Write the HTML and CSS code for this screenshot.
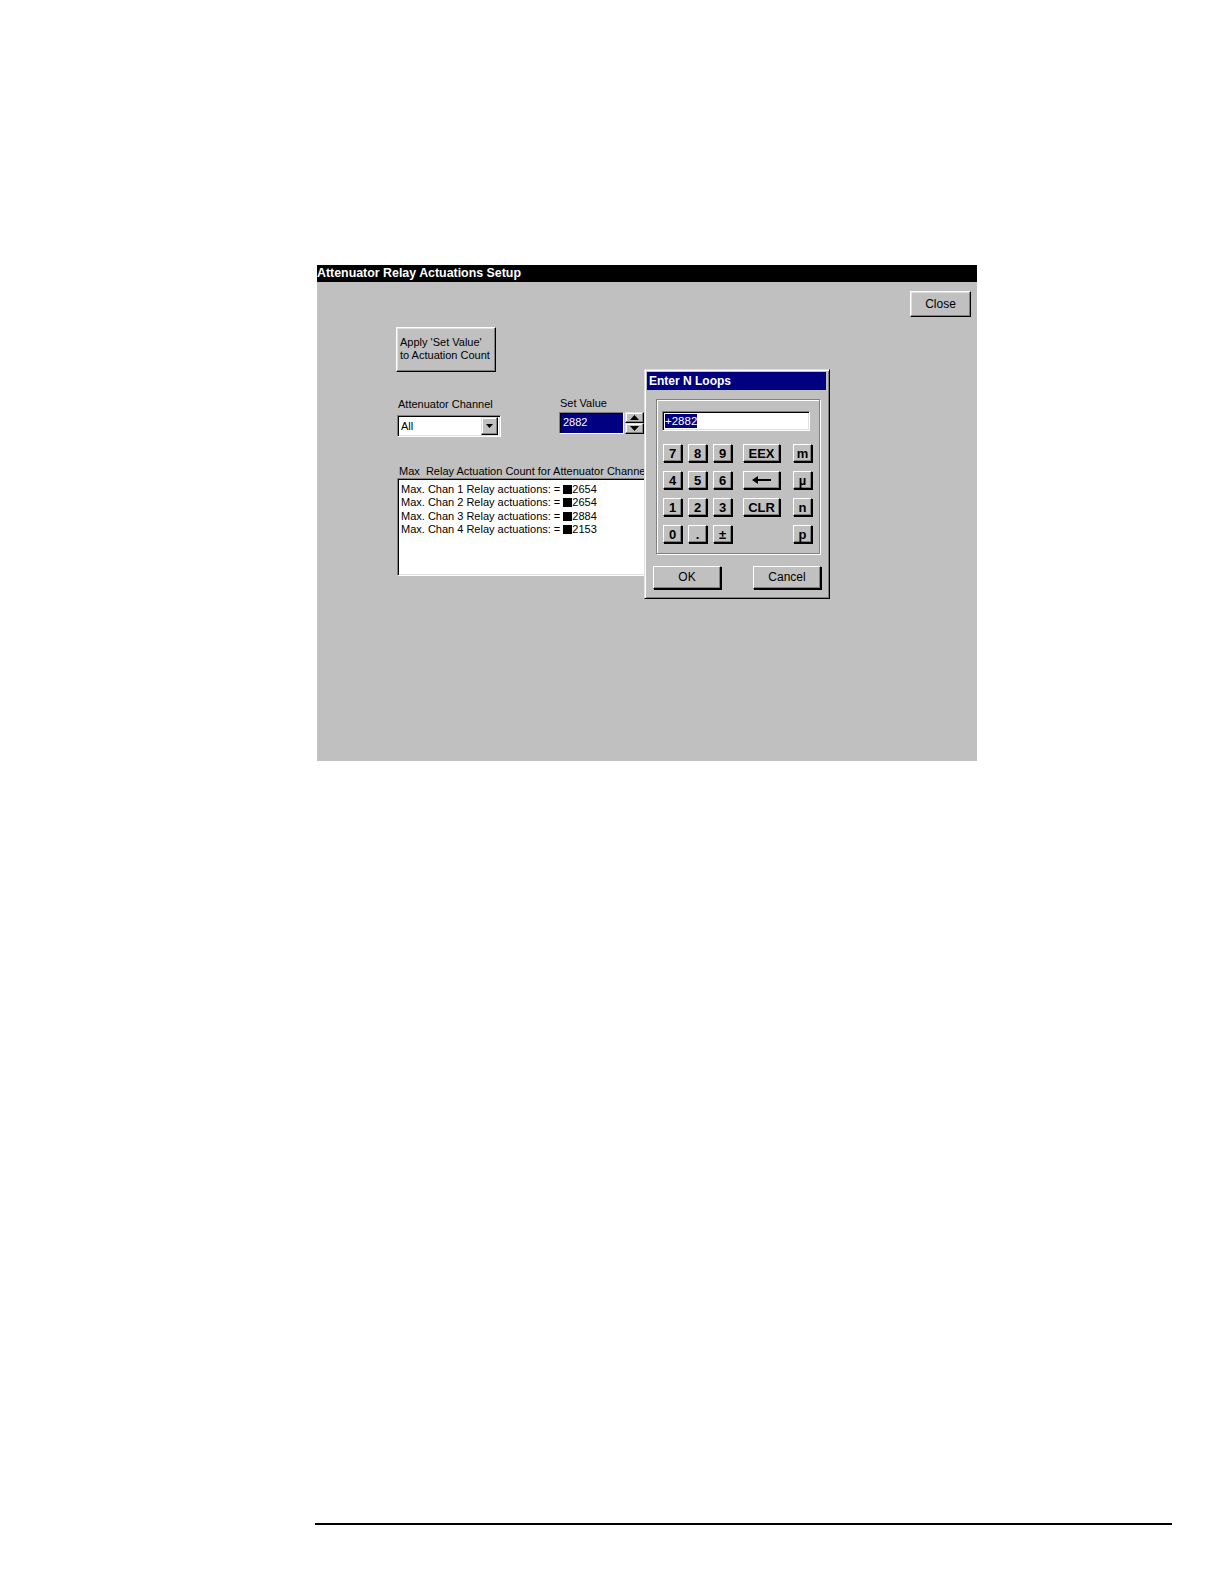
FILE: index.html
```html
<!DOCTYPE html>
<html>
<head>
<meta charset="utf-8">
<title>Attenuator Relay Actuations Setup</title>
<link rel="stylesheet" href="styles.css">
</head>
<body>
<div class="page">
  <div class="window">
    <div class="titlebar">Attenuator Relay Actuations Setup</div>
    <div class="client">
      <div class="close-row"><div class="btn close">Close</div></div>
      <div class="btn apply">Apply 'Set Value'<br>to Actuation Count</div>
      <div class="fields-row">
        <div class="field field-channel">
          <div class="label">Attenuator Channel</div>
          <div class="combo">
            <span class="combo-text">All</span>
            <span class="mini-btn combo-arrow"><svg width="7" height="4" viewBox="0 0 7 4"><path d="M0 0H7L3.5 4Z" fill="#000"/></svg></span>
          </div>
        </div>
        <div class="field field-set">
          <div class="label label-set">Set Value</div>
          <div class="spin-wrap">
            <div class="setinput">2882</div>
            <div class="spin">
              <span class="mini-btn spin-btn"><svg width="9" height="5" viewBox="0 0 9 5"><path d="M0 5H9L4.5 0Z" fill="#000"/></svg></span>
              <span class="mini-btn spin-btn"><svg width="9" height="5" viewBox="0 0 9 5"><path d="M0 0H9L4.5 5Z" fill="#000"/></svg></span>
            </div>
          </div>
        </div>
      </div>
      <div class="list-label">Max&nbsp; Relay Actuation Count for Attenuator Channel</div>
      <div class="listbox">
        <div>Max. Chan 1 Relay actuations: = <span class="sq">■</span>2654</div>
        <div>Max. Chan 2 Relay actuations: = <span class="sq">■</span>2654</div>
        <div>Max. Chan 3 Relay actuations: = <span class="sq">■</span>2884</div>
        <div>Max. Chan 4 Relay actuations: = <span class="sq">■</span>2153</div>
      </div>
    </div>

    <div class="dialog">
      <div class="dlg-title">Enter N Loops</div>
      <div class="group">
        <div class="dlg-input"><span class="sel">+2882</span></div>
        <div class="keypad">
          <div class="key">7</div><div class="key">8</div><div class="key">9</div><div class="key wide">EEX</div><div class="key">m</div>
          <div class="key">4</div><div class="key">5</div><div class="key">6</div>
          <div class="key wide"><svg width="20" height="8" viewBox="0 0 20 8"><path d="M0 4L6 0V3H19V5H6V8Z" fill="#000"/></svg></div>
          <div class="key">µ</div>
          <div class="key">1</div><div class="key">2</div><div class="key">3</div><div class="key wide">CLR</div><div class="key">n</div>
          <div class="key">0</div><div class="key">.</div><div class="key">±</div><div class="empty"></div><div class="key">p</div>
        </div>
      </div>
      <div class="dlg-buttons">
        <div class="btn dlg-btn">OK</div>
        <div class="btn dlg-btn">Cancel</div>
      </div>
    </div>
  </div>
  <div class="footer-rule"></div>
</div>
</body>
</html>
```

FILE: styles.css
```css
html, body {
  margin: 0;
  padding: 0;
  background: #fff;
}

body {
  font-family: "Liberation Sans", Arial, sans-serif;
  font-size: 11px;
  color: #000;
}

.page {
  padding: 265px 0 0 317px;
  height: 1319px;
  position: relative;
}

.window {
  position: relative;
  width: 660px;
  height: 496px;
  background: #c0c0c0;
}

.titlebar {
  height: 17px;
  line-height: 17px;
  background: #000;
  color: #fff;
  font-weight: bold;
  font-size: 12.4px;
  white-space: nowrap;
}

.client {
  padding-top: 9px;
}

.btn {
  box-sizing: border-box;
  background: #c0c0c0;
  border: 1px solid;
  border-color: #fff #000 #000 #fff;
  box-shadow: inset -1px -1px 0 #808080, inset 1px 1px 0 #dfdfdf;
  font-size: 11px;
  line-height: 13px;
}

.close-row {
  display: flex;
  justify-content: flex-end;
  padding-right: 6px;
}

.close {
  width: 61px;
  height: 26px;
  display: flex;
  align-items: center;
  justify-content: center;
  font-size: 12px;
}

.apply {
  margin-left: 79px;
  margin-top: 10px;
  width: 100px;
  height: 45px;
  padding: 8px 0 0 3px;
  white-space: nowrap;
}

.fields-row {
  display: flex;
  align-items: flex-start;
  margin-left: 80px;
  margin-top: 23px;
}

.field-channel {
  margin-top: 3px;
}

.field-set {
  margin-left: 58px;
}

.label {
  line-height: 13px;
  margin-bottom: 4px;
  padding-left: 1px;
  white-space: nowrap;
}

.label.label-set {
  margin-top: 2px;
  margin-bottom: 2px;
}

.combo {
  box-sizing: border-box;
  width: 104px;
  height: 22px;
  background: #fff;
  border: 1px solid;
  border-color: #808080 #fff #fff #808080;
  box-shadow: inset 1px 1px 0 #000, inset -1px -1px 0 #dfdfdf;
  display: flex;
  align-items: center;
  justify-content: space-between;
  padding: 0 2px 0 3px;
}

.combo-text {
  line-height: 13px;
}

.mini-btn {
  box-sizing: border-box;
  display: flex;
  align-items: center;
  justify-content: center;
  background: #c0c0c0;
  border: 1px solid;
  border-color: #dfdfdf #000 #000 #dfdfdf;
  box-shadow: inset -1px -1px 0 #808080, inset 1px 1px 0 #fff;
}

.combo-arrow {
  width: 17px;
  height: 18px;
}

.spin-wrap {
  display: flex;
}

.setinput {
  box-sizing: border-box;
  width: 65px;
  height: 22px;
  background: #000080;
  color: #fff;
  border: 1px solid;
  border-color: #808080 #fff #fff #808080;
  box-shadow: inset 1px 1px 0 #000;
  padding: 3px 0 0 3px;
  line-height: 13px;
}

.spin {
  display: flex;
  flex-direction: column;
  margin-left: 1px;
}

.spin-btn {
  width: 19px;
  height: 11px;
}

.list-label {
  margin-left: 82px;
  margin-top: 28px;
  line-height: 13px;
  white-space: nowrap;
}

.listbox {
  box-sizing: border-box;
  margin-left: 80px;
  width: 320px;
  height: 98px;
  background: #fff;
  border: 1px solid;
  border-color: #808080 #fff #fff #808080;
  box-shadow: inset 1px 1px 0 #000, inset -1px -1px 0 #dfdfdf;
  padding: 4px 0 0 3px;
  line-height: 13.4px;
  white-space: nowrap;
}

.sq {
  display: inline-block;
  width: 9px;
  height: 9px;
  background: #000;
  color: transparent;
  font-size: 9px;
  line-height: 9px;
  overflow: hidden;
  vertical-align: -1px;
}

/* Keypad dialog */
.dialog {
  position: absolute;
  left: 327px;
  top: 104px;
  width: 186px;
  height: 230px;
  box-sizing: border-box;
  background: #c0c0c0;
  border: 1px solid;
  border-color: #dfdfdf #000 #000 #dfdfdf;
  box-shadow: inset 1px 1px 0 #fff, inset -1px -1px 0 #808080;
  padding: 2px;
}

.dlg-title {
  height: 18px;
  line-height: 18px;
  background: #000080;
  color: #fff;
  font-weight: bold;
  font-size: 12px;
  padding-left: 2px;
  margin-right: 1px;
}

.group {
  box-sizing: border-box;
  margin: 9px 0 0 9px;
  width: 164px;
  height: 155px;
  border: 1px solid #808080;
  box-shadow: inset 1px 1px 0 #fff, 1px 1px 0 #fff;
  padding: 11px 0 0 5px;
}

.dlg-input {
  box-sizing: border-box;
  width: 148px;
  height: 20px;
  background: #fff;
  border: 1px solid;
  border-color: #808080 #fff #fff #808080;
  box-shadow: inset 1px 1px 0 #000, inset -1px -1px 0 #dfdfdf;
  padding: 2px 0 0 2px;
  line-height: 14px;
}

.sel {
  background: #000080;
  color: #fff;
  font-size: 11.5px;
  display: inline-block;
  line-height: 14px;
}

.keypad {
  display: grid;
  grid-template-columns: 25px 25px 30px 50px 18px;
  grid-auto-rows: 18px;
  row-gap: 9px;
  margin-top: 13px;
  margin-left: 1px;
}

.key {
  box-sizing: border-box;
  width: 19px;
  height: 18px;
  background: #c0c0c0;
  border: 1px solid;
  border-color: #fff #000 #000 #fff;
  box-shadow: inset -1px -1px 0 #808080, 1px 1px 0 #000;
  display: flex;
  align-items: center;
  justify-content: center;
  font-weight: bold;
  font-size: 13px;
  line-height: 13px;
}

.key.wide {
  width: 37px;
}

.dlg-buttons {
  display: flex;
  justify-content: space-between;
  margin: 12px 6px 0 6px;
}

.dlg-btn {
  width: 68px;
  height: 23px;
  display: flex;
  align-items: center;
  justify-content: center;
  font-size: 12px;
  box-shadow: inset -1px -1px 0 #808080, 1px 1px 0 #000;
}

.footer-rule {
  position: absolute;
  left: 315px;
  top: 1523px;
  width: 857px;
  height: 2px;
  background: #000;
}
```
